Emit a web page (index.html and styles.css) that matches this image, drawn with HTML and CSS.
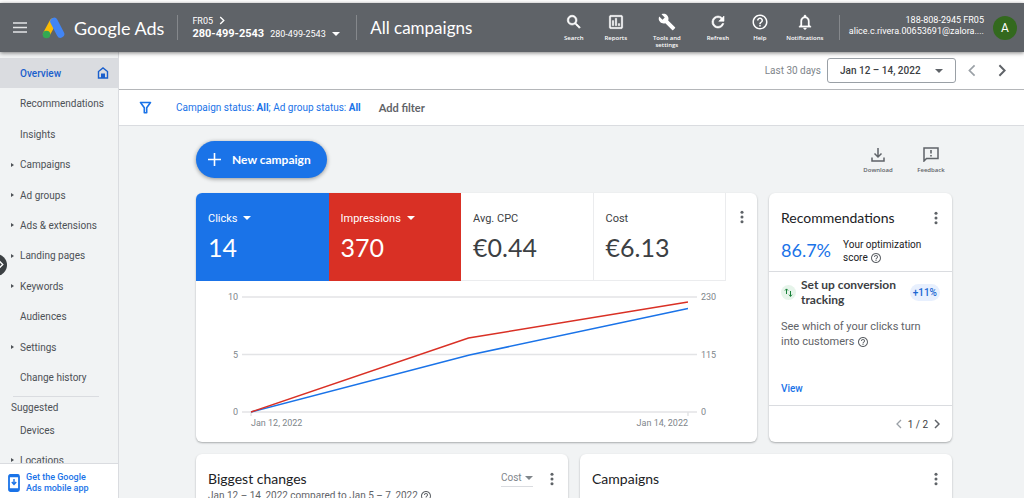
FILE: index.html
```html
<!DOCTYPE html>
<html lang="en">
<head>
    <meta charset="UTF-8">
    <meta name="viewport" content="width=device-width, initial-scale=1.0">
    <title>Overview - Google Ads</title>
    <link rel="stylesheet" href="styles.css">
</head>
<body>
    <!-- shared icons -->
    <svg class="defs" width="0" height="0" aria-hidden="true">
        <symbol id="more" viewBox="0 0 24 24"><circle cx="12" cy="4" r="2.6"/><circle cx="12" cy="12" r="2.6"/><circle cx="12" cy="20" r="2.6"/></symbol>
        <symbol id="help" viewBox="0 0 24 24"><path d="M11 18h2v-2h-2v2zm1-16C6.48 2 2 6.48 2 12s4.480 10 10 10 10-4.480 10-10S17.520 2 12 2zm0 18c-4.410 0-8-3.590-8-8s3.590-8 8-8 8 3.590 8 8-3.590 8-8 8zm0-14c-2.210 0-4 1.790-4 4h2c0-1.100.9-2 2-2s2 .9 2 2c0 2-3 1.750-3 5h2c0-2.250 3-2.500 3-5 0-2.210-1.790-4-4-4z"/></symbol>
        <symbol id="left" viewBox="0 0 12 20"><path d="M10 2L2 10l8 8" fill="none" stroke="currentColor" stroke-width="2.600"/></symbol>
        <symbol id="right" viewBox="0 0 12 20"><path d="M2 2l8 8-8 8" fill="none" stroke="currentColor" stroke-width="3"/></symbol>
    </svg>

    <header class="topbar">
        <button class="icon-btn menu-btn" aria-label="Main menu">
            <svg width="14" height="11" viewBox="0 0 14 11"><path d="M0 1h14M0 5.500h14M0 10h14" stroke="#e4e5e6" stroke-width="1.700"/></svg>
        </button>
        <a class="brand" href="#">
            <svg width="24" height="22" viewBox="0 0 24 22">
                <path d="M4.500 17L11 5" stroke="#fbbc04" stroke-width="7" stroke-linecap="round"/>
                <path d="M12 4.500l6.500 12.500" stroke="#4285f4" stroke-width="7.600" stroke-linecap="round"/>
                <circle cx="4.500" cy="17.500" r="3.800" fill="#34a853"/>
            </svg>
            <span>Google Ads</span>
        </a>
        <span class="bar"></span>
        <div class="account">
            <a class="manager" href="#">FR05 <svg width="6" height="9"><use href="#right"/></svg></a>
            <div class="account-row">
                <strong>280-499-2543</strong>
                <select aria-label="Account"><option>280-499-2543</option></select>
                <span class="caret"></span>
            </div>
        </div>
        <span class="bar"></span>
        <h1>All campaigns</h1>

        <nav class="tools" aria-label="Tools">
            <button>
                <svg width="18" height="18" viewBox="0 0 24 24"><path stroke="#fff" stroke-width=".8" d="M15.500 14h-.79l-.28-.27A6.470 6.470 0 0 0 16 9.500 6.500 6.500 0 1 0 9.500 16c1.610 0 3.090-.59 4.230-1.570l.27.28v.79l5 4.990L20.490 19l-4.990-5zm-6 0C7.010 14 5 11.990 5 9.500S7.010 5 9.500 5 14 7.010 14 9.500 11.990 14 9.500 14z"/></svg>
                Search
            </button>
            <button>
                <svg width="18" height="18" viewBox="0 0 24 24"><path stroke="#fff" stroke-width=".4" d="M19 3H5c-1.100 0-2 .9-2 2v14c0 1.100.9 2 2 2h14c1.100 0 2-.9 2-2V5c0-1.100-.9-2-2-2zm0 16H5V5h14v14zM7 10h2v7H7zM11 7h2v10h-2zM15 14h2v3h-2z"/></svg>
                Reports
            </button>
            <button class="wide">
                <svg width="18" height="18" viewBox="0 0 24 24"><path d="M22.700 19l-9.100-9.100c.9-2.300.4-5-1.500-6.900-2-2-5-2.400-7.400-1.300L9 6 6 9 1.600 4.700C.4 7.100.9 10.100 2.900 12.100c1.900 1.900 4.600 2.400 6.900 1.500l9.100 9.100c.4.400 1 .4 1.400 0l2.300-2.300c.5-.4.5-1.100.1-1.400z"/></svg>
                Tools and settings
            </button>
            <button>
                <svg width="18" height="18" viewBox="0 0 24 24"><path stroke="#fff" stroke-width=".8" d="M17.650 6.350A7.958 7.958 0 0 0 12 4a8 8 0 1 0 7.730 10h-2.080A5.990 5.990 0 0 1 12 18c-3.310 0-6-2.690-6-6s2.690-6 6-6c1.660 0 3.140.69 4.220 1.780L13 11h7V4l-2.350 2.350z"/></svg>
                Refresh
            </button>
            <button>
                <svg width="18" height="18"><use href="#help"/></svg>
                Help
            </button>
            <button class="notif">
                <svg width="18" height="18" viewBox="0 0 24 24"><path stroke="#fff" stroke-width=".4" d="M12 22c1.100 0 2-.9 2-2h-4c0 1.100.9 2 2 2zm6-6v-5c0-3.070-1.630-5.640-4.500-6.320V4c0-.83-.67-1.500-1.500-1.500s-1.500.67-1.500 1.500v.68C7.640 5.360 6 7.920 6 11v5l-2 2v1h16v-1l-2-2zm-2 1H8v-6c0-2.480 1.510-4.500 4-4.500s4 2.020 4 4.500v6z"/></svg>
                Notifications
            </button>
        </nav>
        <span class="bar"></span>
        <div class="user">
            <span>188-808-2945 FR05</span>
            <span>alice.c.rivera.00653691@zalora....</span>
        </div>
        <button class="avatar" aria-label="Google account">A</button>
    </header>

    <div class="layout">
        <aside class="sidebar">
            <nav class="side-nav" aria-label="Pages">
                <a class="active" href="#">Overview
                    <svg width="12" height="12" viewBox="0 0 12 12"><path d="M1.500 11V4.500L6 1l4.500 3.500V11z" fill="none" stroke="#1a5fcc" stroke-width="1.400"/><path d="M4 6.500h4V11H4z" fill="#1a5fcc"/></svg>
                </a>
                <a href="#">Recommendations</a>
                <a href="#">Insights</a>
                <a class="sub" href="#">Campaigns</a>
                <a class="sub" href="#">Ad groups</a>
                <a class="sub" href="#">Ads &amp; extensions</a>
                <a class="sub" href="#">Landing pages</a>
                <a class="sub" href="#">Keywords</a>
                <a href="#">Audiences</a>
                <a class="sub" href="#">Settings</a>
                <a href="#">Change history</a>
            </nav>
            <div class="suggested">
                <h2>Suggested</h2>
                <a href="#">Devices</a>
                <a class="sub" href="#">Locations</a>
            </div>
            <a class="app-link" href="#">
                <svg width="12" height="18" viewBox="0 0 12 18"><rect x="1" y="1" width="10" height="16" rx="1.500" fill="none" stroke="#1a73e8" stroke-width="1.800"/><path d="M1 2h10M1 15.500h10" stroke="#1a73e8" stroke-width="2.400"/><path d="M6 5v5M3.800 8L6 10.400 8.200 8" fill="none" stroke="#1a73e8" stroke-width="1.400"/></svg>
                <span>Get the Google Ads mobile app</span>
            </a>
            <button class="expand" aria-label="Expand navigation"><svg width="6" height="9"><use href="#right"/></svg></button>
        </aside>

        <main>
            <div class="date-bar">
                <label for="range">Last 30 days</label>
                <div class="date-box">
                    <select id="range"><option>Jan 12 – 14, 2022</option></select>
                    <span class="caret"></span>
                </div>
                <button class="icon-btn prev" aria-label="Previous period"><svg width="8" height="13"><use href="#left"/></svg></button>
                <button class="icon-btn" aria-label="Next period"><svg width="8" height="13"><use href="#right"/></svg></button>
            </div>

            <div class="filter-bar">
                <button class="icon-btn" aria-label="Filter">
                    <svg width="13" height="13" viewBox="0 0 13 13"><path d="M1.500 1.500h10L7.700 6.800v5H5.300v-5z" fill="none" stroke="#1a73e8" stroke-width="1.600" stroke-linejoin="round"/></svg>
                </button>
                <a class="status" href="#">Campaign status: <b>All</b>; Ad group status: <b>All</b></a>
                <button class="add-filter">Add filter</button>
            </div>

            <div class="content">
                <div class="actions">
                    <button class="new-btn">
                        <svg width="13" height="13" viewBox="0 0 13 13"><path d="M6.500 0v13M0 6.500h13" stroke="#fff" stroke-width="1.600"/></svg>
                        New campaign
                    </button>
                    <button class="action">
                        <svg width="14" height="14" viewBox="0 0 14 14"><path d="M7 0v8.500M3.500 5.500L7 9l3.500-3.500M1 9.500V13h12V9.500" fill="none" stroke="#5f6368" stroke-width="1.500"/></svg>
                        Download
                    </button>
                    <button class="action">
                        <svg width="16" height="15" viewBox="0 0 16 15"><path d="M1 14V1h14v10.500H3.500z" fill="none" stroke="#5f6368" stroke-width="1.500"/><path d="M8 3v3.500M8 8v1.600" stroke="#5f6368" stroke-width="1.600"/></svg>
                        Feedback
                    </button>
                </div>

                <div class="row top-row">
                    <section class="card">
                        <div class="scores">
                            <div class="score blue">
                                <div class="metric"><select aria-label="First metric"><option>Clicks</option></select><span class="caret"></span></div>
                                <div class="value">14</div>
                            </div>
                            <div class="score red">
                                <div class="metric"><select aria-label="Second metric"><option>Impressions</option></select><span class="caret"></span></div>
                                <div class="value">370</div>
                            </div>
                            <div class="score">
                                <div class="metric">Avg. CPC</div>
                                <div class="value">€0.44</div>
                            </div>
                            <div class="score">
                                <div class="metric">Cost</div>
                                <div class="value">€6.13</div>
                            </div>
                            <button class="icon-btn more" aria-label="More options"><svg width="14" height="14"><use href="#more"/></svg></button>
                        </div>
                        <div class="chart">
                            <div class="axis axis-left"><span>10</span><span>5</span><span>0</span></div>
                            <div class="plot">
                                <svg viewBox="0 0 454 120" preserveAspectRatio="none">
                                    <path class="grid" d="M0 1h454M0 58.500h454M0 116h454M9 116v4M445 116v4"/>
                                    <path class="line" stroke="#1a73e8" d="M9 116L227 59 445 12.500"/>
                                    <path class="line" stroke="#d93025" d="M9 116L226 42 445 6"/>
                                </svg>
                                <div class="dates"><span>Jan 12, 2022</span><span>Jan 14, 2022</span></div>
                            </div>
                            <div class="axis"><span>230</span><span>115</span><span>0</span></div>
                        </div>
                    </section>

                    <section class="card rec">
                        <div class="card-head">
                            <h2>Recommendations</h2>
                            <button class="icon-btn" aria-label="More options"><svg width="14" height="14"><use href="#more"/></svg></button>
                        </div>
                        <div class="optimization">
                            <span class="percent">86.7%</span>
                            <span>Your optimization score <svg class="q" width="12" height="12"><use href="#help"/></svg></span>
                        </div>
                        <div class="rec-body">
                            <div class="rec-title">
                                <svg width="15" height="15" viewBox="0 0 15 15"><circle cx="7.500" cy="7.500" r="7.500" fill="#e6f4ea"/><path d="M5.500 9V4M4 5.500l1.500-1.600L7 5.500M9.500 6v5.500M8 9.700l1.500 1.600L11 9.700" fill="none" stroke="#188038"/></svg>
                                <h3>Set up conversion tracking</h3>
                                <span class="badge">+11%</span>
                            </div>
                            <p>See which of your clicks turn into customers <svg class="q" width="12" height="12"><use href="#help"/></svg></p>
                            <a href="#">View</a>
                        </div>
                        <div class="pager">
                            <button class="icon-btn prev" aria-label="Previous"><svg width="6" height="10"><use href="#left"/></svg></button>
                            <span>1 / 2</span>
                            <button class="icon-btn" aria-label="Next"><svg width="6" height="10"><use href="#right"/></svg></button>
                        </div>
                    </section>
                </div>

                <div class="row half-row">
                    <section class="card">
                        <div class="card-head">
                            <h2>Biggest changes</h2>
                            <div class="cost-select"><select aria-label="Metric"><option>Cost</option></select><span class="caret"></span></div>
                            <button class="icon-btn" aria-label="More options"><svg width="14" height="14"><use href="#more"/></svg></button>
                        </div>
                        <div class="compare">Jan 12 – 14, 2022 compared to Jan 5 – 7, 2022 <svg class="q" width="12" height="12"><use href="#help"/></svg></div>
                    </section>
                    <section class="card">
                        <div class="card-head">
                            <h2>Campaigns</h2>
                            <button class="icon-btn" aria-label="More options"><svg width="14" height="14"><use href="#more"/></svg></button>
                        </div>
                    </section>
                </div>
            </div>
        </main>
    </div>
</body>
</html>
```

FILE: styles.css
```css
* {
    box-sizing: border-box;
}

body {
    margin: 0;
    padding-top: 3px;
    height: 100vh;
    display: flex;
    flex-direction: column;
    overflow: hidden;
    background-color: #ffffff;
    color: #3c4043;
    font-family: Roboto, "Liberation Sans", sans-serif;
    font-size: 10px;
}

h1, h2, h3, p {
    margin: 0;
    font-weight: normal;
}

a {
    color: inherit;
    text-decoration: none;
}

button, select {
    margin: 0;
    padding: 0;
    border: none;
    background: none;
    color: inherit;
    font: inherit;
    cursor: pointer;
}

select {
    appearance: none;
}

svg {
    flex: none;
    fill: currentColor;
}

.defs {
    position: absolute;
}

.icon-btn {
    display: flex;
    align-items: center;
    justify-content: center;
    color: #5f6368;
}

.caret {
    flex: none;
    border: 4px solid transparent;
    border-top-color: currentColor;
    border-bottom: none;
}

/* top bar */
.topbar {
    position: relative;
    z-index: 2;
    flex: none;
    display: flex;
    align-items: center;
    height: 49px;
    padding: 0 7px 0 13px;
    background-color: #5f6368;
    color: #ffffff;
    box-shadow: 0 1px 4px rgba(0, 0, 0, 0.5);
}

.bar {
    flex: none;
    width: 1px;
    height: 25px;
    background-color: #85888c;
}

.brand {
    display: flex;
    align-items: center;
    gap: 8px;
    margin: 0 13px 0 15px;
    font-family: Lato, sans-serif;
    font-size: 18px;
    white-space: nowrap;
}

.account {
    margin: 0 16px 0 14px;
    font-size: 9px;
}

.manager {
    display: flex;
    align-items: center;
    gap: 6px;
    line-height: 12px;
}

.account-row {
    display: flex;
    align-items: center;
    gap: 6px;
    line-height: 14px;
    white-space: nowrap;
}

.account-row strong {
    font-size: 11px;
    font-weight: 700;
}

h1 {
    margin-left: 13px;
    font-family: Lato, sans-serif;
    font-size: 17px;
    white-space: nowrap;
}

.tools {
    display: flex;
    align-items: flex-start;
    height: 49px;
    margin: 0 10px 0 auto;
    padding-top: 10px;
}

.tools button {
    display: flex;
    flex-direction: column;
    align-items: center;
    gap: 4px;
    width: 42px;
    padding: 0 8px;
    font-family: "Open Sans", sans-serif;
    font-size: 6px;
    font-weight: 600;
    line-height: 7px;
}

.tools .wide {
    width: 60px;
    padding: 0 14px;
}

.tools .notif {
    width: 48px;
    padding: 0;
}

.user {
    display: flex;
    flex-direction: column;
    align-items: flex-end;
    margin: 0 9px 3px;
    font-size: 9px;
    line-height: 11px;
    white-space: nowrap;
}

.avatar {
    width: 24px;
    height: 24px;
    border-radius: 50%;
    background-color: #33691e;
    font-size: 12px;
}

.layout {
    flex: 1;
    display: flex;
    min-height: 0;
}

/* sidebar */
.sidebar {
    position: relative;
    flex: none;
    display: flex;
    flex-direction: column;
    width: 119px;
    padding-top: 6px;
    border-right: 1px solid #dadce0;
    background-color: #f1f3f4;
    color: #4d5156;
}

.side-nav {
    flex: none;
    display: grid;
    grid-template-rows: repeat(11, 1fr);
    height: 335px;
}

.side-nav a, .suggested a {
    position: relative;
    display: flex;
    align-items: center;
    justify-content: space-between;
    padding: 0 9px 0 20px;
    white-space: nowrap;
}

.side-nav .active {
    background-color: #dadce0;
    color: #1a5fcc;
    font-weight: 500;
}

.sub::before {
    content: "";
    position: absolute;
    left: 11px;
    border: 2px solid transparent;
    border-left: 3px solid #4d5156;
    border-right: none;
}

.suggested {
    flex: 1;
    min-height: 0;
    overflow: hidden;
}

.suggested h2 {
    margin: 3px 19px 0 13px;
    padding-top: 4px;
    border-top: 1px solid #dadce0;
    font-size: 10px;
    line-height: 14px;
    text-indent: -2px;
}

.suggested a {
    height: 30px;
}

.app-link {
    flex: none;
    display: flex;
    align-items: center;
    gap: 6px;
    height: 35px;
    padding: 3px 20px 0 8px;
    border-top: 1px solid #dadce0;
    background-color: #ffffff;
    color: #1a73e8;
    font-size: 9px;
    font-weight: 500;
    line-height: 11px;
}

.expand {
    position: absolute;
    top: 202px;
    left: -15px;
    width: 22px;
    height: 22px;
    padding-left: 10px;
    border-radius: 50%;
    background-color: #3c4043;
    color: #ffffff;
}

/* date and filter bars */
main {
    flex: 1;
    display: flex;
    flex-direction: column;
    min-width: 0;
    background-color: #f1f3f4;
}

.date-bar {
    flex: none;
    display: flex;
    align-items: center;
    justify-content: flex-end;
    height: 38px;
    padding-right: 18px;
    border-bottom: 1px solid #b4b6b9;
    background-color: #ffffff;
    color: #5f6368;
}

.date-bar label {
    margin-right: 6px;
    color: #80868b;
}

.date-box {
    display: flex;
    align-items: center;
    justify-content: space-between;
    width: 129px;
    height: 25px;
    margin-right: 12px;
    padding: 0 12px;
    border: 1px solid #9aa0a6;
    border-radius: 3px;
}

.date-box select {
    color: #3c4043;
    font-weight: 500;
}

.date-bar .prev {
    margin-right: 22px;
}

.prev {
    color: #9aa0a6;
}

.filter-bar {
    flex: none;
    display: flex;
    align-items: center;
    height: 36px;
    padding-left: 20px;
    border-bottom: 1px solid #dadce0;
    background-color: #ffffff;
}

.status {
    margin: 0 18px 0 24px;
    color: #1a73e8;
}

.add-filter {
    color: #5f6368;
    font-family: Lato, sans-serif;
    font-size: 11px;
    font-weight: bold;
}

/* page content */
.content {
    flex: 1;
    min-height: 0;
    padding: 15px 72px 0 77px;
    overflow: hidden;
}

.actions {
    display: flex;
    align-items: center;
    margin-bottom: 15px;
}

.new-btn {
    display: flex;
    align-items: center;
    gap: 11px;
    height: 37px;
    margin-right: auto;
    padding: 0 16px 0 12px;
    border-radius: 19px;
    background-color: #1a73e8;
    color: #ffffff;
    box-shadow: 0 1px 4px rgba(0, 0, 0, 0.4);
    font-family: Lato, sans-serif;
    font-size: 12px;
    font-weight: bold;
}

.action {
    display: flex;
    flex-direction: column;
    align-items: center;
    justify-content: flex-end;
    gap: 4px;
    width: 42px;
    height: 28px;
    margin-left: 11px;
    color: #5f6368;
    font-family: "Open Sans", sans-serif;
    font-size: 6px;
    font-weight: 600;
    line-height: 8px;
}

.row {
    display: grid;
    gap: 12px;
    margin-bottom: 12px;
}

.top-row {
    grid-template-columns: 1fr 183px;
}

.half-row {
    grid-template-columns: 1fr 1fr;
}

.card {
    border-radius: 6px;
    background-color: #ffffff;
    box-shadow: 0 1px 2px rgba(60, 64, 67, 0.4);
    overflow: hidden;
}

.scores {
    display: grid;
    grid-template-columns: repeat(4, 1fr) 31px;
}

.score {
    height: 88px;
    padding: 18px 12px 0;
    border: solid #ebecee;
    border-width: 0 1px 1px 0;
}

.score.blue {
    border-color: #1a73e8;
    background-color: #1a73e8;
    color: #ffffff;
}

.score.red {
    border-color: #d93025;
    background-color: #d93025;
    color: #ffffff;
}

.metric {
    display: flex;
    align-items: center;
    gap: 5px;
    height: 14px;
    font-size: 11px;
}

.value {
    margin-top: 6px;
    font-family: Lato, sans-serif;
    font-size: 25px;
    line-height: 32px;
}

.more {
    align-self: start;
    margin-top: 17px;
}

.chart {
    display: flex;
    gap: 4px;
    padding: 10px 32px 13px 24px;
    color: #80868b;
    font-size: 9px;
}

.axis {
    display: flex;
    flex-direction: column;
    justify-content: space-between;
    width: 24px;
    height: 127px;
    line-height: 12px;
}

.axis-left {
    width: 18px;
    text-align: right;
}

.plot {
    flex: 1;
    padding-top: 5px;
}

.plot svg {
    display: block;
    width: 100%;
    height: 120px;
    fill: none;
}

.grid {
    stroke: #e3e4e6;
    stroke-width: 1.500;
}

.line {
    stroke-width: 1.500;
    vector-effect: non-scaling-stroke;
}

.dates {
    display: flex;
    justify-content: space-between;
    padding: 1px 9px 0;
    line-height: 12px;
}

/* cards */
.card-head {
    display: flex;
    align-items: center;
    justify-content: space-between;
    height: 49px;
    padding: 0 9px 0 12px;
}

.card-head h2 {
    margin-right: auto;
    color: #202124;
    font-family: Lato, sans-serif;
    font-size: 14px;
}

.q {
    vertical-align: -3px;
    color: #5f6368;
}

.rec {
    display: flex;
    flex-direction: column;
}

.optimization {
    display: flex;
    align-items: center;
    gap: 12px;
    height: 29px;
    padding: 0 24px 12px 12px;
    color: #202124;
    line-height: 13px;
}

.percent {
    color: #1a73e8;
    font-family: Lato, sans-serif;
    font-size: 18px;
}

.rec-body {
    flex: 1;
    padding: 5px 12px 0;
    border: solid #dadce0;
    border-width: 1px 0;
    color: #5f6368;
    font-size: 11px;
    line-height: 15px;
}

.rec-title {
    display: flex;
    align-items: center;
    gap: 5px;
    margin-bottom: 12px;
}

.rec-title h3 {
    flex: 1;
    color: #3c4043;
    font-family: Lato, sans-serif;
    font-size: 12px;
    font-weight: bold;
}

.badge {
    padding: 1px 3px;
    border-radius: 9px;
    background-color: #e8f0fe;
    color: #1967d2;
    font-size: 10px;
    font-weight: 500;
}

.rec-body a {
    display: block;
    margin-top: 32px;
    color: #1a73e8;
    font-size: 10px;
    font-weight: 500;
}

.pager {
    display: flex;
    align-items: center;
    justify-content: flex-end;
    gap: 6px;
    height: 36px;
    padding-right: 12px;
}

.cost-select {
    display: flex;
    align-items: center;
    gap: 3px;
    margin-right: 12px;
    border-bottom: 1px solid #dadce0;
    color: #80868b;
    font-size: 10px;
    line-height: 16px;
}

.compare {
    margin-top: -13px;
    padding: 0 12px;
    color: #5f6368;
}
```
